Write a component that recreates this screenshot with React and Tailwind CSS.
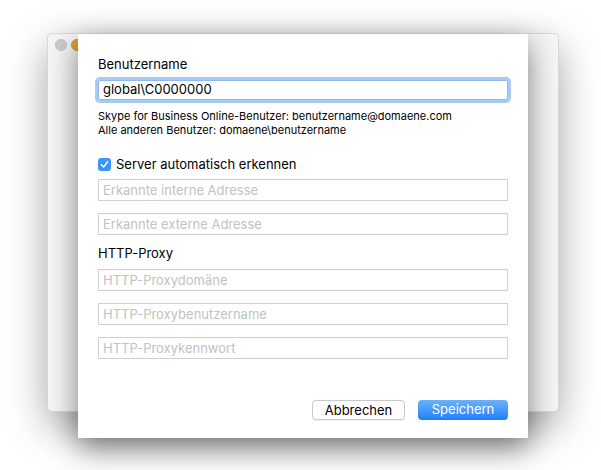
import React from 'react';

const font = { fontFamily: 'Inter, "Liberation Sans", Arial, sans-serif' };

const Field = ({ placeholder }) => (
  <input
    type="text"
    placeholder={placeholder}
    className="w-[410px] h-[22px] border border-[#cfcfcf] bg-white px-[4px] text-[13px] text-black placeholder:text-[#c2c2c2] outline-none"
  />
);

export default function App() {
  return (
    <div className="relative w-[601px] h-[470px] overflow-hidden bg-white" style={font}>
      {/* main window behind the sheet */}
      <div className="absolute left-[47px] top-[33px] w-[512px] h-[379px] rounded-[5px] bg-[#f6f6f6] border border-[#d9d9d9] shadow-[0_14px_40px_rgba(0,0,0,0.35)]">
        <div className="flex gap-[4px] pl-[7px] pt-[5px]">
          <span className="w-[12px] h-[12px] rounded-full bg-[#cdcdcd] border border-[#c2c2c2]" />
          <span className="w-[12px] h-[12px] rounded-full bg-[#e2a52d] border border-[#d29a2a]" />
        </div>
      </div>

      {/* sheet */}
      <div className="absolute left-[78px] top-[34px] w-[450px] h-[404px] bg-white shadow-[0_10px_28px_rgba(0,0,0,0.5)] pl-[20px] pr-[20px] pt-[22px]">
        <div className="text-[13px] text-black leading-[16px]">Benutzername</div>
        <div className="mt-[8px] w-[410px] h-[20px] rounded-[2px] border border-[#8fb9ea] shadow-[0_0_0_3px_#a6cbf6] flex items-center px-[4px] text-[13px] text-black">
          global\C0000000
        </div>
        <div className="mt-[9px] text-[11px] leading-[14px] text-black">
          <div>Skype for Business Online-Benutzer: benutzername@domaene.com</div>
          <div>Alle anderen Benutzer: domaene\benutzername</div>
        </div>

        <div className="mt-[19px] flex items-center gap-[5px]">
          <span className="w-[13px] h-[13px] rounded-[3px] bg-[#3e96f8] flex items-center justify-center">
            <svg width="9" height="9" viewBox="0 0 10 10">
              <path d="M1.5 5.2 L4 7.8 L8.5 1.8" fill="none" stroke="white" strokeWidth="1.6" strokeLinecap="round" strokeLinejoin="round" />
            </svg>
          </span>
          <span className="text-[13px] text-black leading-[16px]">Server automatisch erkennen</span>
        </div>

        <div className="mt-[7px] flex flex-col gap-[12px]">
          <Field placeholder="Erkannte interne Adresse" />
          <Field placeholder="Erkannte externe Adresse" />
        </div>

        <div className="mt-[10px] text-[13px] text-black leading-[16px]">HTTP-Proxy</div>

        <div className="mt-[8px] flex flex-col gap-[12px]">
          <Field placeholder="HTTP-Proxydomäne" />
          <Field placeholder="HTTP-Proxybenutzername" />
          <Field placeholder="HTTP-Proxykennwort" />
        </div>

        <div className="mt-[41px] flex justify-end gap-[13px]">
          <button className="w-[93px] h-[20px] rounded-[4px] border border-[#c9c9c9] bg-white text-[13px] text-black shadow-[0_1px_1px_rgba(0,0,0,0.06)]">
            Abbrechen
          </button>
          <button className="w-[90px] h-[20px] rounded-[4px] bg-gradient-to-b from-[#6bb1fb] to-[#1a7ffb] text-[13px] text-white">
            Speichern
          </button>
        </div>
      </div>
    </div>
  );
}
